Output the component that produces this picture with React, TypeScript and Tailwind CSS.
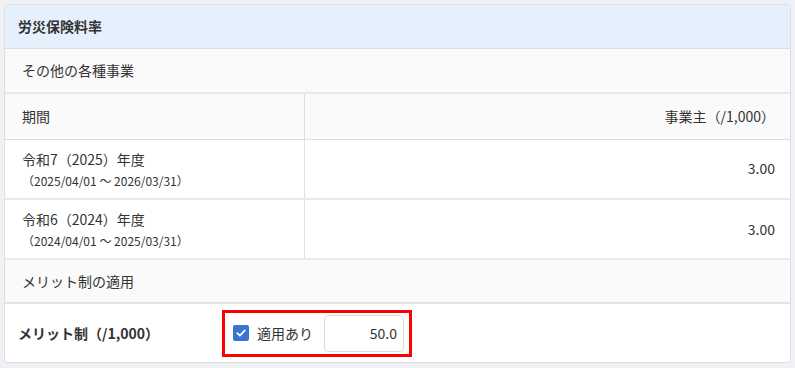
import React, { useState } from 'react';

type RateRow = {
    label: string;
    range: string;
    rate: string;
};

const rows: RateRow[] = [
    { label: '令和7（2025）年度', range: '（2025/04/01 ～ 2026/03/31）', rate: '3.00' },
    { label: '令和6（2024）年度', range: '（2024/04/01 ～ 2025/03/31）', rate: '3.00' },
];

const App: React.FC = () => {
    const [applied, setApplied] = useState(true);
    const [merit, setMerit] = useState('50.0');

    return (
        <div
            className="min-h-screen bg-[#f0f1f4] p-[4px] text-[14px] text-[#333]"
            style={{ fontFamily: '"Noto Sans CJK JP", "Noto Sans", sans-serif' }}
        >
            <div className="w-[787px] h-[359px] bg-white border border-[#dcdfe4] rounded-[4px] overflow-hidden">
                <div className="h-[44px] flex items-center px-[13px] bg-[#e6f0fc] border-b border-[#dcdfe4] font-bold">
                    労災保険料率
                </div>

                <div className="h-[45px] flex items-center px-[17px] bg-[#fafafa] border-b-2 border-[#e8e9ec]">
                    その他の各種事業
                </div>

                <table className="w-full border-collapse">
                    <thead>
                        <tr className="h-[45px] bg-[#fafafa] border-b border-[#dcdfe4]">
                            <th className="w-[299px] text-left font-normal px-[17px] border-r border-[#dcdfe4]">期間</th>
                            <th className="text-right font-normal px-[15px]">事業主（/1,000）</th>
                        </tr>
                    </thead>
                    <tbody>
                        {rows.map((r) => (
                            <tr key={r.label} className="h-[60px] border-b-2 border-[#e8e9ec]">
                                <td className="px-[17px] border-r border-[#dcdfe4] align-middle">
                                    <div className="leading-[20px] mt-[2px]">{r.label}</div>
                                    <div className="text-[12px] leading-[20px] mt-[2px]">{r.range}</div>
                                </td>
                                <td className="text-right px-[15px] align-middle">{r.rate}</td>
                            </tr>
                        ))}
                    </tbody>
                </table>

                <div className="h-[44px] flex items-center px-[17px] bg-[#fafafa] border-b-2 border-[#e2e4e8]">
                    メリット制の適用
                </div>

                <div className="h-[58px] flex items-center px-[13px]">
                    <div className="w-[204px] font-bold">メリット制（/1,000）</div>
                    <div className="w-[190px] h-[47px] border-[3px] border-[#ff0000] flex items-center pl-[8px] pr-[5px]">
                        <label className="flex items-center cursor-pointer">
                            <input
                                type="checkbox"
                                className="sr-only"
                                checked={applied}
                                onChange={(e) => setApplied(e.target.checked)}
                            />
                            <span className="w-[16px] h-[16px] rounded-[2px] bg-[#3a74d4] flex items-center justify-center">
                                {applied && (
                                    <svg width="12" height="12" viewBox="0 0 12 12" fill="none">
                                        <path d="M2.3 6.2 L4.9 8.7 L9.8 3.4" stroke="white" strokeWidth="1.8" strokeLinecap="round" strokeLinejoin="round" />
                                    </svg>
                                )}
                            </span>
                            <span className="ml-[8px]">適用あり</span>
                        </label>
                        <input
                            className="ml-auto w-[80px] h-[37px] border border-[#d8dbe0] rounded-[4px] text-right px-[6px] text-[14px] text-[#333] outline-none"
                            value={merit}
                            onChange={(e) => setMerit(e.target.value)}
                        />
                    </div>
                </div>
            </div>
        </div>
    );
};

export default App;
